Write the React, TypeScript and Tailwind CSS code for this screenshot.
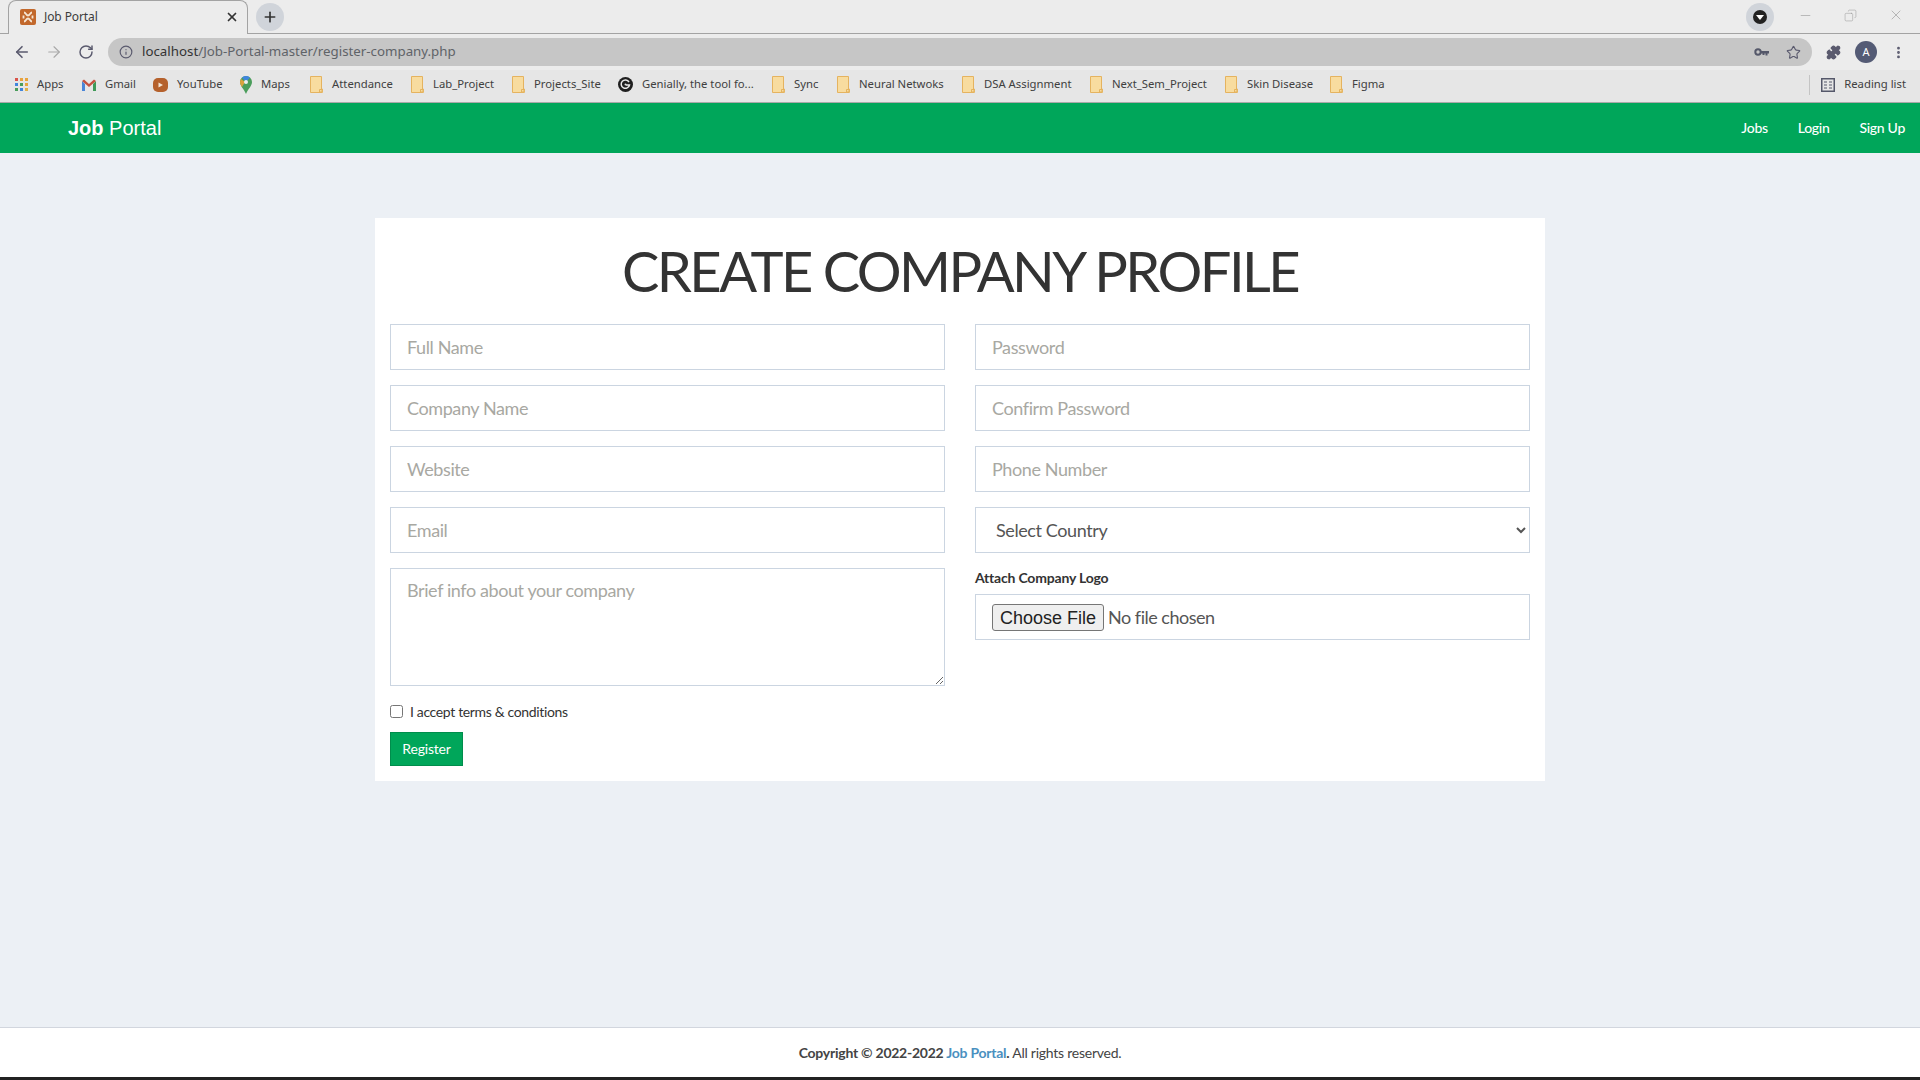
import React from 'react';
import { ArrowLeft, ArrowRight, RotateCw, Info, Plus, X, Minus, Star, Puzzle, EllipsisVertical, Copy } from 'lucide-react';

const bodyFont = "font-['Lato','Noto_Sans',sans-serif]";

const BookmarkFile = () => (
  <svg width="13" height="17" viewBox="0 0 13 17" className="shrink-0">
    <path d="M.5.5h11v12.5h.9v3.500H.5z" fill="#f8dc9f" stroke="#e5b35f" />
    <path d="M9.500 13.500h2.500v2.500h-2.500z" fill="#f8dc9f" stroke="#e5b35f" />
  </svg>
);

const AppsIcon = () => {
  const colors = ['#d9534a', '#e8a33d', '#e8a33d', '#3f85dd', '#4a9d5b', '#e8a33d', '#4a9d5b', '#3f85dd', '#e0b04a'];
  return (
    <div className="grid grid-cols-3 gap-[2px] shrink-0">
      {colors.map((c, i) => (
        <div key={i} className="w-[3px] h-[3px]" style={{ backgroundColor: c }} />
      ))}
    </div>
  );
};

const GmailIcon = () => (
  <svg width="14" height="12" viewBox="0 0 14 12" className="shrink-0">
    <path d="M0 2v10h3V5z" fill="#4a86d8" />
    <path d="M14 2v10h-3V5z" fill="#3f9a57" />
    <path d="M0 2 L2 .5 L7 5 L12 .5 L14 2 L7 8z" fill="#c5523f" />
  </svg>
);

const YoutubeIcon = () => (
  <svg width="15" height="14" viewBox="0 0 15 14" className="shrink-0">
    <rect width="15" height="14" rx="5" fill="#b5612c" />
    <path d="M5.500 4.500v5l4.500-2.500z" fill="#f4e5d3" />
  </svg>
);

const MapsIcon = () => (
  <svg width="12" height="18" viewBox="0 0 12 18" className="shrink-0">
    <path d="M6 0a6 6 0 0 1 6 6c0 4-4 7-6 12C4 13 0 10 0 6a6 6 0 0 1 6-6z" fill="#4a9d5b" />
    <path d="M2 1.500a6 6 0 0 1 8 0L6 6z" fill="#3f85dd" />
    <path d="M1 3l4 3-3 5C1 9.500 0 8 0 6a6 6 0 0 1 1-3z" fill="#d9a23d" />
    <circle cx="6" cy="6" r="2" fill="#eee" />
  </svg>
);

const GeniallyIcon = () => (
  <svg width="15" height="15" viewBox="0 0 15 15" className="shrink-0">
    <circle cx="7.500" cy="7.500" r="7.500" fill="#1f1f1f" />
    <path d="M11 5a4.200 4.200 0 1 0 .5 3H8" fill="none" stroke="#e8e8e8" strokeWidth="1.500" />
    <circle cx="7.500" cy="7.500" r="1" fill="#e8e8e8" />
  </svg>
);

const XamppIcon = () => (
  <svg width="16" height="16" viewBox="0 0 16 16" className="shrink-0">
    <rect width="16" height="16" rx="2" fill="#c2682c" />
    <path d="M4 3.500c2 0 2 3 4 3s2-3 4-3M4 12.500c2 0 2-3 4-3s2 3 4 3M3.500 6.500v3M12.500 6.500v3" fill="none" stroke="#f6e6d3" strokeWidth="1.800" />
  </svg>
);

const KeyIcon = () => (
  <svg width="15" height="9" viewBox="0 0 15 9" className="shrink-0 mr-[17px]">
    <circle cx="4" cy="4" r="2.700" fill="none" stroke="#55586a" strokeWidth="2" />
    <path d="M6.500 3h8.500v2.500h-1.500v2h-2v-2h-1v1.500h-2v-1.500h-2z" fill="#55586a" />
  </svg>
);

const bookmarks: { label: string; icon: React.ReactNode; width: string }[] = [
  { label: 'Apps', icon: <AppsIcon />, width: 'w-[67px]' },
  { label: 'Gmail', icon: <GmailIcon />, width: 'w-[71px]' },
  { label: 'YouTube', icon: <YoutubeIcon />, width: 'w-[87px]' },
  { label: 'Maps', icon: <MapsIcon />, width: 'w-[70px]' },
  { label: 'Attendance', icon: <BookmarkFile />, width: 'w-[101px]' },
  { label: 'Lab_Project', icon: <BookmarkFile />, width: 'w-[101px]' },
  { label: 'Projects_Site', icon: <BookmarkFile />, width: 'w-[106px]' },
  { label: 'Genially, the tool fo...', icon: <GeniallyIcon />, width: 'w-[154px]' },
  { label: 'Sync', icon: <BookmarkFile />, width: 'w-[65px]' },
  { label: 'Neural Netwoks', icon: <BookmarkFile />, width: 'w-[125px]' },
  { label: 'DSA Assignment', icon: <BookmarkFile />, width: 'w-[128px]' },
  { label: 'Next_Sem_Project', icon: <BookmarkFile />, width: 'w-[135px]' },
  { label: 'Skin Disease', icon: <BookmarkFile />, width: 'w-[105px]' },
  { label: 'Figma', icon: <BookmarkFile />, width: 'w-[60px]' },
];

const BrowserChrome = () => (
  <div className="font-['Noto_Sans',sans-serif] text-[#3c3c3c]">
    {/* Tab strip */}
    <div className="h-[34px] bg-[#ececec] border-b border-[#a3a3a3] flex items-end pl-2 pr-[16px] relative">
      <div className="w-[240px] h-[34px] -mb-px bg-[#ececec] border border-b-0 border-[#a3a3a3] rounded-t-lg flex items-center pl-[11px] pr-2 pb-[2px] gap-2">
        <XamppIcon />
        <span className="text-xs flex-1 tracking-[-0.1px]">Job Portal</span>
        <X size={14} strokeWidth={3} className="text-[#333]" />
      </div>
      <div className="w-7 h-7 rounded-full bg-[#d0d4da] flex items-center justify-center ml-2 mb-[2px]">
        <Plus size={16} strokeWidth={2.500} className="text-[#333]" />
      </div>
      <div className="flex-1" />
      <div className="w-7 h-7 rounded-full bg-[#d0d4da] flex items-center justify-center mb-[2px]">
        <div className="w-[14px] h-[14px] rounded-full bg-[#222] flex items-center justify-center">
          <div className="w-0 h-0 border-x-[4px] border-x-transparent border-t-[5px] border-t-white" />
        </div>
      </div>
      <div className="flex items-center gap-[31px] ml-[24px] mb-[10px] text-[#9a9a9a]">
        <Minus size={15} strokeWidth={1} />
        <Copy size={13} strokeWidth={1} className="-scale-x-100" />
        <X size={16} strokeWidth={1} />
      </div>
    </div>

    {/* Toolbar */}
    <div className="h-[36px] bg-[#ececec] flex items-center pl-[13px] pr-[14px] text-[#5a5a6e]">
      <ArrowLeft size={18} strokeWidth={2.200} />
      <ArrowRight size={18} strokeWidth={1.500} className="ml-[14px] text-[#a8a8a8]" />
      <RotateCw size={16} strokeWidth={2.200} className="ml-[15px]" />
      <div className="ml-[14px] h-[28px] w-[1704px] shrink-0 rounded-full bg-[#c6c6c6] flex items-center pl-[11px] pr-[11px]">
        <Info size={14} />
        <span className="ml-[9px] text-[13.300px] text-[#5f6368] flex-1">
          <span className="text-[#333]">localhost</span>/Job-Portal-master/register-company.php
        </span>
        <KeyIcon />
        <Star size={15} strokeWidth={1.800} />
      </div>
      <div className="flex-1 flex items-center justify-between pl-[14px]">
        <Puzzle size={15} fill="currentColor" />
        <div className="w-[22px] h-[22px] rounded-full bg-[#545b75] text-white text-[11px] flex items-center justify-center">A</div>
        <EllipsisVertical size={15} strokeWidth={2.500} />
      </div>
    </div>

    {/* Bookmarks */}
    <div className="h-[33px] bg-[#e6e6e6] border-b border-[#a9a9a9] flex items-center pl-[15px] pb-[3px] text-[11.300px] text-[#404040]">
      {bookmarks.map((b) => (
        <div key={b.label} className={`${b.width} shrink-0 flex items-center gap-[9px] whitespace-nowrap`}>
          {b.icon}
          <span>{b.label}</span>
        </div>
      ))}
      <div className="flex-1" />
      <div className="h-[20px] border-l border-[#c4c4c4] pl-[11px] mr-[14px] flex items-center gap-[9px]">
        <svg width="14" height="14" viewBox="0 0 14 14" className="shrink-0">
          <rect x=".75" y=".75" width="12.500" height="12.500" fill="none" stroke="#55586a" strokeWidth="1.500" />
          <path d="M3 4h3M3 7h3M3 10h3M8 4h3M8 7h3M8 10h3" stroke="#55586a" />
        </svg>
        <span>Reading list</span>
      </div>
    </div>
  </div>
);

const Field = ({ placeholder }: { placeholder: string }) => (
  <input
    type="text"
    placeholder={placeholder}
    className="w-full h-[46px] border border-[#cbd5e1] bg-white px-4 text-[18px] tracking-[-0.4px] outline-none placeholder:text-[#a8a8a2]"
  />
);

export default function App() {
  return (
    <div className={`h-screen flex flex-col bg-[#ecf0f5] overflow-hidden ${bodyFont}`}>
      <BrowserChrome />

      {/* Navbar */}
      <header className="h-[50px] bg-[#00a65a] flex items-center pl-[68px] pr-[15px] text-white">
        <span className="text-[20px] font-['Liberation_Sans',sans-serif]">
          <b>Job</b> Portal
        </span>
        <nav className="ml-auto flex items-center gap-[30px] text-[14px] font-medium tracking-[-0.3px] pb-[1px]">
          <a>Jobs</a>
          <a>Login</a>
          <a>Sign Up</a>
        </nav>
      </header>

      <main className="flex-1 pt-[65px]">
        <section className="w-[1170px] mx-auto bg-white px-[15px] pb-[15px]">
          <h1 className="h-[106px] flex items-center justify-center text-[56px] tracking-[-2.550px] text-[#333]">CREATE COMPANY PROFILE</h1>
          <div className="grid grid-cols-2 gap-x-[30px]">
            <div className="flex flex-col gap-[15px]">
              <Field placeholder="Full Name" />
              <Field placeholder="Company Name" />
              <Field placeholder="Website" />
              <Field placeholder="Email" />
              <textarea
                placeholder="Brief info about your company"
                className="w-full h-[118px] block border border-[#cbd5e1] bg-white px-4 py-2 text-[18px] tracking-[-0.4px] outline-none placeholder:text-[#a8a8a2]"
              />
              <label className="flex items-center gap-[7px] text-[14px] tracking-[-0.35px] text-[#333] mt-[3px] h-[14px]">
                <input type="checkbox" className="w-[13px] h-[13px] m-0" />
                I accept terms &amp; conditions
              </label>
              <button className="w-[73px] h-[34px] -mt-[1px] bg-[#00a65a] border border-[#008d4c] text-white text-[14px] tracking-[-0.2px] pb-[1px]">Register</button>
            </div>
            <div className="flex flex-col gap-[15px] self-start">
              <Field placeholder="Password" />
              <Field placeholder="Confirm Password" />
              <Field placeholder="Phone Number" />
              <select className="w-full h-[46px] border border-[#cbd5e1] bg-white px-4 text-[18px] tracking-[-0.4px] text-[#555] outline-none">
                <option>Select Country</option>
              </select>
              <div className="flex flex-col gap-[9px] mt-[3px]">
                <span className="text-[14px] tracking-[-0.2px] font-bold text-[#333] leading-none">Attach Company Logo</span>
                <div className="h-[46px] border border-[#cbd5e1] flex items-center px-4 text-[18px] tracking-[-0.5px] text-[#555]">
                  <input type="file" className="w-full file:font-['Liberation_Sans',sans-serif] file:tracking-normal file:text-[18px] file:h-[27px] file:px-[7px] file:mr-1 file:bg-[#efefef] file:border file:border-[#767676] file:rounded-[3px] file:text-[#222]" />
                </div>
              </div>
            </div>
          </div>
        </section>
      </main>

      {/* Footer */}
      <footer className="h-[53px] bg-white border-t border-[#d2d6de] border-b-[3px] border-b-[#222] flex items-center justify-center text-[14px] tracking-[-0.25px] text-[#444]">
        <span>
          <b>Copyright © 2022-2022 <span className="text-[#4a90bf]">Job Portal</span>.</b> All rights reserved.
        </span>
      </footer>
    </div>
  );
}
